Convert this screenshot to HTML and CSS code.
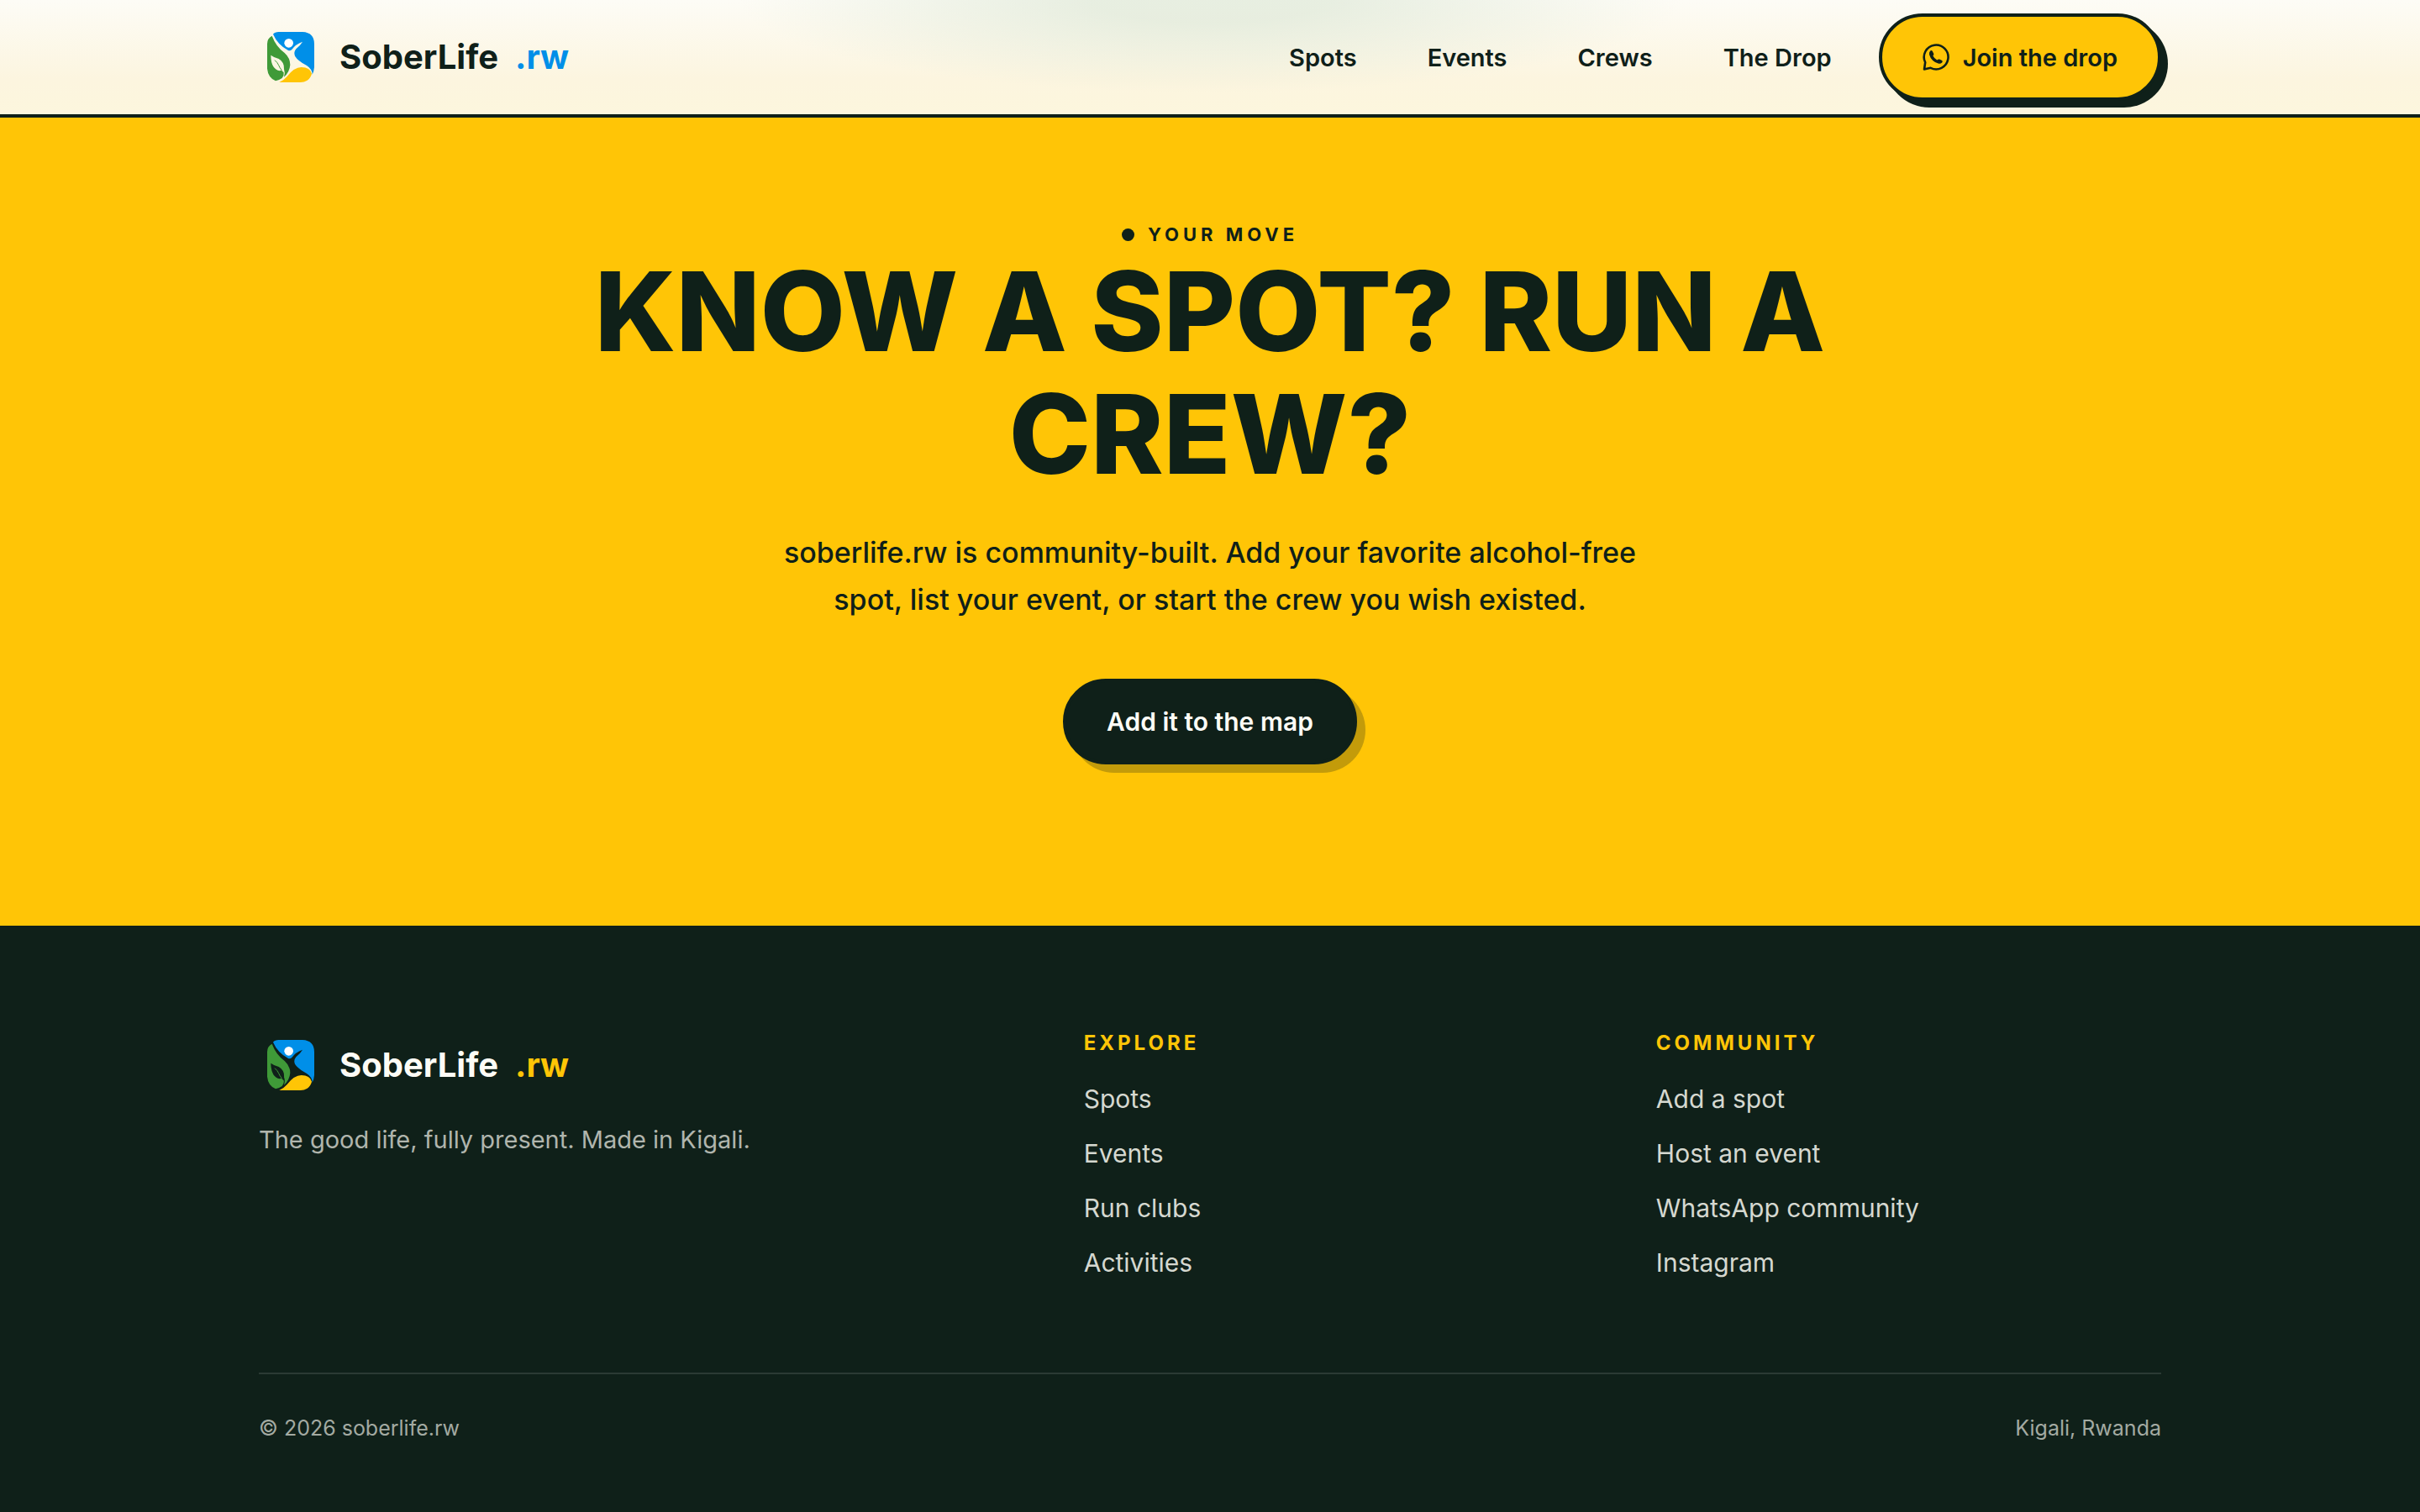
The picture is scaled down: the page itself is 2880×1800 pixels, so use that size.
FILE: index.html
```
<!DOCTYPE html>
<html lang="en">
<head>
    <meta charset="UTF-8">
    <meta name="viewport" content="width=device-width, initial-scale=1.0">
    <title>SoberLife.rw</title>
    <link rel="stylesheet" href="styles.css">
</head>
<body>
    <svg class="sprite" aria-hidden="true">
        <symbol id="logo-mark" viewBox="9 15 228 228">
            <path fill="#008fe8" d="M60 47Q66 39 80 39H165Q207 41 207 82V165Q206 180 200 191Q200 172 180 159Q148 142 138 125Q132 112 142 100Q157 88 165 74Q140 83 127 102Q121 108 114 105Q76 84 60 47Z"/>
            <path fill="#3f9a38" fill-rule="evenodd" d="M56 53Q39 62 39 82V170Q42 202 69 214Q79 213 92 204Q100 194 98 184L90 176Q74 182 61 163Q52 148 52 122Q64 131 80 135Q101 147 99 172Q104 186 99 200Q119 183 121 157Q121 132 101 114Q70 91 56 53Z"/>
            <path class="logo-vein" d="M66 140Q75 147 80 158Q84 168 91 176"/>
            <path fill="#ffc506" d="M82 219Q97 213 110 198Q135 165 161 165Q192 165 198 188Q194 204 182 212Q171 219 158 219Z"/>
            <circle cx="116" cy="79" r="16" fill="#fff"/>
        </symbol>
    </svg>

    <header class="site-header">
        <div class="container header-inner">
            <a class="logo" href="#">
                <svg class="logo-mark"><use href="#logo-mark"/></svg>
                <span>SoberLife</span>
                <span class="logo-tld">.rw</span>
            </a>
            <nav class="nav">
                <a class="nav-link" href="#spots">Spots</a>
                <a class="nav-link" href="#events">Events</a>
                <a class="nav-link" href="#crews">Crews</a>
                <a class="nav-link" href="#drop">The Drop</a>
                <a class="btn btn-yellow" href="#join">
                    <svg class="btn-icon" viewBox="0 0 32 32" aria-hidden="true">
                        <path fill="none" stroke="currentColor" stroke-width="2.6" stroke-linejoin="round" d="M2 30.500L3.200 22.300A14.400 14.400 0 1 1 9.600 28.800Z"/>
                        <path fill="currentColor" d="M9.200 8.500Q10.800 7.500 11.800 9L13.300 12Q13.600 13.100 12.400 14.600Q14 17.900 17.200 19.500Q19 18.200 20 18.500L23.100 20Q24.300 20.900 23.400 22.300Q21.400 24.500 18.600 23.600Q10.400 21 8 13Q7.500 10 9.200 8.500Z"/>
                    </svg>
                    Join the drop
                </a>
            </nav>
        </div>
    </header>

    <main class="cta">
        <p class="eyebrow">Your move</p>
        <h1 class="cta-title">Know a spot? Run a crew?</h1>
        <p class="cta-text">soberlife.rw is community-built. Add your favorite alcohol-free spot, list your event, or start the crew you wish existed.</p>
        <a class="btn btn-dark" href="#add">Add it to the map</a>
    </main>

    <footer class="site-footer">
        <div class="container">
            <div class="footer-grid">
                <div>
                    <a class="logo" href="#">
                        <svg class="logo-mark"><use href="#logo-mark"/></svg>
                        <span>SoberLife</span>
                        <span class="logo-tld">.rw</span>
                    </a>
                    <p class="tagline">The good life, fully present. Made in Kigali.</p>
                </div>
                <div>
                    <h2 class="footer-title">Explore</h2>
                    <ul class="footer-links">
                        <li><a href="#spots">Spots</a></li>
                        <li><a href="#events">Events</a></li>
                        <li><a href="#clubs">Run clubs</a></li>
                        <li><a href="#activities">Activities</a></li>
                    </ul>
                </div>
                <div>
                    <h2 class="footer-title">Community</h2>
                    <ul class="footer-links">
                        <li><a href="#add">Add a spot</a></li>
                        <li><a href="#host">Host an event</a></li>
                        <li><a href="#whatsapp">WhatsApp community</a></li>
                        <li><a href="#instagram">Instagram</a></li>
                    </ul>
                </div>
            </div>
            <div class="footer-bottom">
                <span>© 2026 soberlife.rw</span>
                <span>Kigali, Rwanda</span>
            </div>
        </div>
    </footer>
</body>
</html>
```
FILE: styles.css
```
:root {
    --ink: #0f2019;
    --yellow: #ffc506;
    --blue: #008fe8;
    --green: #3f9a38;
    --paper: #fdfcf6;
}

* {
    box-sizing: border-box;
    margin: 0;
    padding: 0;
}

body {
    font-family: Inter, "Liberation Sans", sans-serif;
    color: var(--ink);
    background: var(--ink);
}

a {
    color: inherit;
    text-decoration: none;
}

.sprite {
    display: none;
}

.container {
    max-width: 2360px;
    margin: 0 auto;
    padding: 0 48px;
}

/* Header */
.site-header {
    border-bottom: 4px solid var(--ink);
    background:
        radial-gradient(ellipse 560px 110px at 50% 0, rgba(220, 231, 214, 0.65) 25%, rgba(220, 231, 214, 0) 100%),
        linear-gradient(#fdfcf6, #fcf5df 70%, #fcf6dd);
}

.header-inner {
    display: flex;
    align-items: center;
    justify-content: space-between;
    padding-top: 16px;
    padding-bottom: 16px;
}

.logo {
    display: flex;
    align-items: center;
    gap: 20px;
    font-size: 40px;
    font-weight: 700;
    line-height: 76px;
}

.logo-mark {
    width: 76px;
    height: 76px;
}

.logo-vein {
    fill: none;
    stroke: var(--green);
    stroke-width: 3;
}

.logo-tld {
    color: var(--blue);
}

.nav {
    display: flex;
    align-items: center;
    gap: 28px;
    font-size: 29px;
}

.nav-link {
    padding: 0 28px;
    font-weight: 600;
}

.btn {
    display: inline-flex;
    align-items: center;
    gap: 16px;
    height: 104px;
    padding: 0 48px;
    border: 4px solid var(--ink);
    border-radius: 999px;
    font-weight: 600;
    white-space: nowrap;
}

.btn-yellow {
    background: var(--yellow);
    box-shadow: 8px 8px 0 var(--ink);
}

.btn-dark {
    height: 102px;
    font-size: 30px;
    color: var(--paper);
    background: var(--ink);
    box-shadow: 10px 10px 0 rgba(15, 32, 25, 0.25);
}

.btn-icon {
    width: 32px;
    height: 32px;
}

/* Call to action */
.cta {
    display: flex;
    flex-direction: column;
    align-items: center;
    padding: 120px 48px 192px;
    text-align: center;
    background: var(--yellow);
}

.eyebrow {
    display: flex;
    align-items: center;
    gap: 16px;
    font-size: 22px;
    font-weight: 700;
    line-height: 38px;
    letter-spacing: 5px;
    text-transform: uppercase;
}

.eyebrow::before {
    content: "";
    width: 15px;
    height: 15px;
    border-radius: 50%;
    background: var(--ink);
}

.cta-title {
    max-width: 1680px;
    font-size: 131px;
    font-weight: 800;
    line-height: 146px;
    text-transform: uppercase;
}

.cta-text {
    max-width: 1060px;
    margin: 40px 0 66px;
    font-size: 34px;
    font-weight: 500;
    line-height: 56px;
}

/* Footer */
.site-footer {
    padding: 128px 0 80px;
    color: var(--paper);
    background: var(--ink);
}

.site-footer .logo-tld {
    color: var(--yellow);
}

.footer-grid {
    display: grid;
    grid-template-columns: 3fr 2fr 2fr;
    gap: 80px;
    padding-bottom: 108px;
}

.tagline {
    margin-top: 28px;
    font-size: 29px;
    line-height: 46px;
    color: #b0b5ad;
}

.footer-title {
    margin-bottom: 32px;
    font-size: 24px;
    font-weight: 700;
    line-height: 24px;
    letter-spacing: 4px;
    text-transform: uppercase;
    color: var(--yellow);
}

.footer-links {
    display: grid;
    gap: 20px;
    list-style: none;
    font-size: 30px;
    line-height: 45px;
    color: #d5d8d0;
}

.footer-bottom {
    display: flex;
    justify-content: space-between;
    padding-top: 44px;
    border-top: 2px solid #2b3a34;
    font-size: 25px;
    line-height: 40px;
    color: #a3aaa2;
}
```
